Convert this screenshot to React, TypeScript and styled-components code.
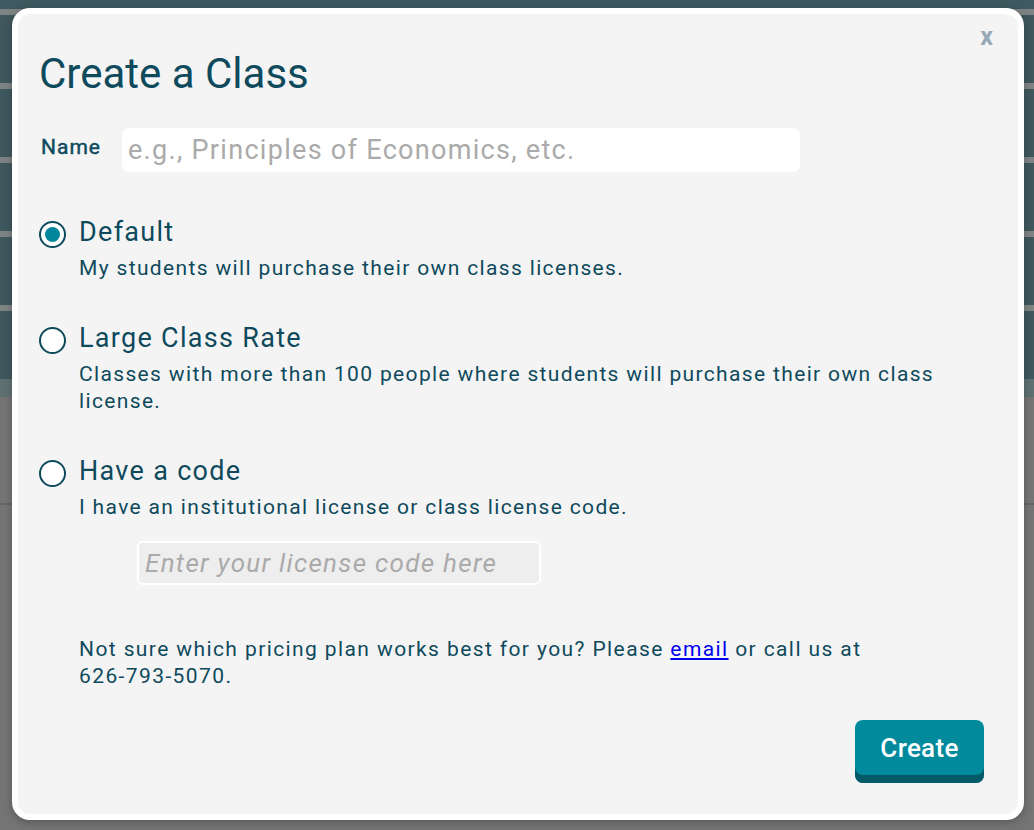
import React from "react";
import styled, { createGlobalStyle } from "styled-components";

const Global = createGlobalStyle`
  html, body { margin: 0; padding: 0; }
  body {
    width: 1034px;
    height: 830px;
    overflow: hidden;
    font-family: Roboto, "Liberation Sans", sans-serif;
    background: #747474;
  }
`;

const Stage = styled.div`
  position: relative;
  width: 1034px;
  height: 830px;
  overflow: hidden;
`;

const Backdrop = styled.div`
  display: flex;
  flex-direction: column;
  width: 100%;
  height: 100%;
`;

const TopBar = styled.div`
  height: 9px;
  background: #3e5a60;
`;

const BgRow = styled.div`
  height: 68px;
  background: #3f585d;
  border-top: 6px solid #7e8384;
`;

const BgFooter = styled.div`
  height: 18px;
  background: #5f7072;
`;

const BgLower = styled.div`
  flex: 1;
  background: #747474;
`;

const BgLine = styled.div`
  height: 2px;
  margin-top: 106px;
  background: #666;
  width: 100%;
`;

const Modal = styled.div`
  position: absolute;
  left: 12px;
  top: 8px;
  width: 1000px;
  height: 800px;
  border: 6px solid #ffffff;
  border-radius: 18px;
  background: #f4f4f4;
  box-shadow: 0 2px 8px rgba(0, 0, 0, 0.25);
  box-sizing: content-box;
  color: #0e4a5c;
`;

const Inner = styled.div`
  display: flex;
  flex-direction: column;
  padding: 36px 34px 0 21px;
  height: 100%;
  box-sizing: border-box;
`;

const Close = styled.button`
  position: absolute;
  top: 8px;
  right: 25px;
  border: none;
  background: transparent;
  color: #97aab8;
  font-family: Roboto, "Liberation Sans", sans-serif;
  font-weight: 700;
  font-size: 25px;
  line-height: 30px;
  padding: 0;
`;

const Title = styled.h1`
  margin: 0;
  font-size: 42px;
  font-weight: 400;
  line-height: 48px;
  letter-spacing: 0;
  color: #0e4a5c;
`;

const NameRow = styled.div`
  display: flex;
  align-items: center;
  margin-top: 30px;
`;

const Label = styled.label`
  font-size: 21px;
  font-weight: 400;
  -webkit-text-stroke: 0.45px #0e4a5c;
  letter-spacing: 1px;
  margin-left: 2px;
  margin-top: -6px;
  width: 81px;
`;

const TextInput = styled.input`
  width: 678px;
  height: 44px;
  box-sizing: border-box;
  border: none;
  border-radius: 7px;
  background: #ffffff;
  padding: 0 6px;
  font-family: Roboto, "Liberation Sans", sans-serif;
  font-size: 27px;
  letter-spacing: 1.3px;
  color: #333;
  outline: none;
  &::placeholder { color: #aaaaaa; }
`;

const Options = styled.div`
  display: flex;
  flex-direction: column;
  margin-top: 42px;
  gap: 38px;
`;

const Option = styled.div`
  display: grid;
  grid-template-columns: 40px 1fr;
  align-items: start;
`;

const Radio = styled.span<{ $checked?: boolean }>`
  width: 27px;
  height: 27px;
  box-sizing: border-box;
  border-radius: 50%;
  border: 2px solid #0e4a5c;
  background: #fff;
  display: flex;
  align-items: center;
  justify-content: center;
  margin-top: 6.5px;
  &::after {
    content: "";
    display: ${(p) => (p.$checked ? "block" : "none")};
    width: 15px;
    height: 15px;
    border-radius: 50%;
    background: #00879b;
  }
`;

const OptText = styled.div`
  display: flex;
  flex-direction: column;
`;

const OptTitle = styled.div`
  font-size: 27px;
  line-height: 36px;
  letter-spacing: 1.3px;
`;

const OptDesc = styled.div`
  font-size: 21px;
  line-height: 27px;
  letter-spacing: 1.35px;
  margin-top: 5px;
  max-width: 880px;
`;

const CodeInput = styled.input`
  margin-top: 20px;
  margin-left: 98px;
  width: 404px;
  height: 44px;
  box-sizing: border-box;
  border: 2px solid #ffffff;
  border-radius: 6px;
  background: #eeeeee;
  padding: 0 6px;
  font-family: Roboto, "Liberation Sans", sans-serif;
  font-style: italic;
  font-size: 26px;
  letter-spacing: 1.3px;
  outline: none;
  &::placeholder { color: #aaaaaa; }
`;

const Help = styled.p`
  margin: 51px 0 0 40px;
  font-size: 21px;
  line-height: 27px;
  letter-spacing: 1.4px;
  max-width: 800px;
  a { color: #0000ee; }
`;

const Footer = styled.div`
  display: flex;
  justify-content: flex-end;
  margin-top: 30px;
`;

const CreateButton = styled.button`
  width: 129px;
  height: 63px;
  border: none;
  border-radius: 8px;
  background: #008a9c;
  box-shadow: inset 0 -8px 0 #015a68;
  color: #fff;
  font-family: Roboto, "Liberation Sans", sans-serif;
  font-size: 26px;
  font-weight: 500;
  letter-spacing: 0.3px;
  padding: 0 0 8px;
`;

export default function App() {
  return (
    <Stage>
      <Global />
      <Backdrop>
        <TopBar />
        <BgRow />
        <BgRow />
        <BgRow />
        <BgRow />
        <BgRow />
        <BgFooter />
        <BgLower>
          <BgLine />
        </BgLower>
      </Backdrop>
      <Modal>
        <Close aria-label="close">x</Close>
        <Inner>
          <Title>Create a Class</Title>
          <NameRow>
            <Label>Name</Label>
            <TextInput placeholder="e.g., Principles of Economics, etc." />
          </NameRow>
          <Options>
            <Option>
              <Radio $checked />
              <OptText>
                <OptTitle>Default</OptTitle>
                <OptDesc>My students will purchase their own class licenses.</OptDesc>
              </OptText>
            </Option>
            <Option>
              <Radio />
              <OptText>
                <OptTitle>Large Class Rate</OptTitle>
                <OptDesc>
                  Classes with more than 100 people where students will purchase their own class license.
                </OptDesc>
              </OptText>
            </Option>
            <Option>
              <Radio />
              <OptText>
                <OptTitle>Have a code</OptTitle>
                <OptDesc>I have an institutional license or class license code.</OptDesc>
              </OptText>
            </Option>
          </Options>
          <CodeInput placeholder="Enter your license code here" />
          <Help>
            Not sure which pricing plan works best for you? Please <a href="#">email</a> or call us at 626-793-5070.
          </Help>
          <Footer>
            <CreateButton>Create</CreateButton>
          </Footer>
        </Inner>
      </Modal>
    </Stage>
  );
}
